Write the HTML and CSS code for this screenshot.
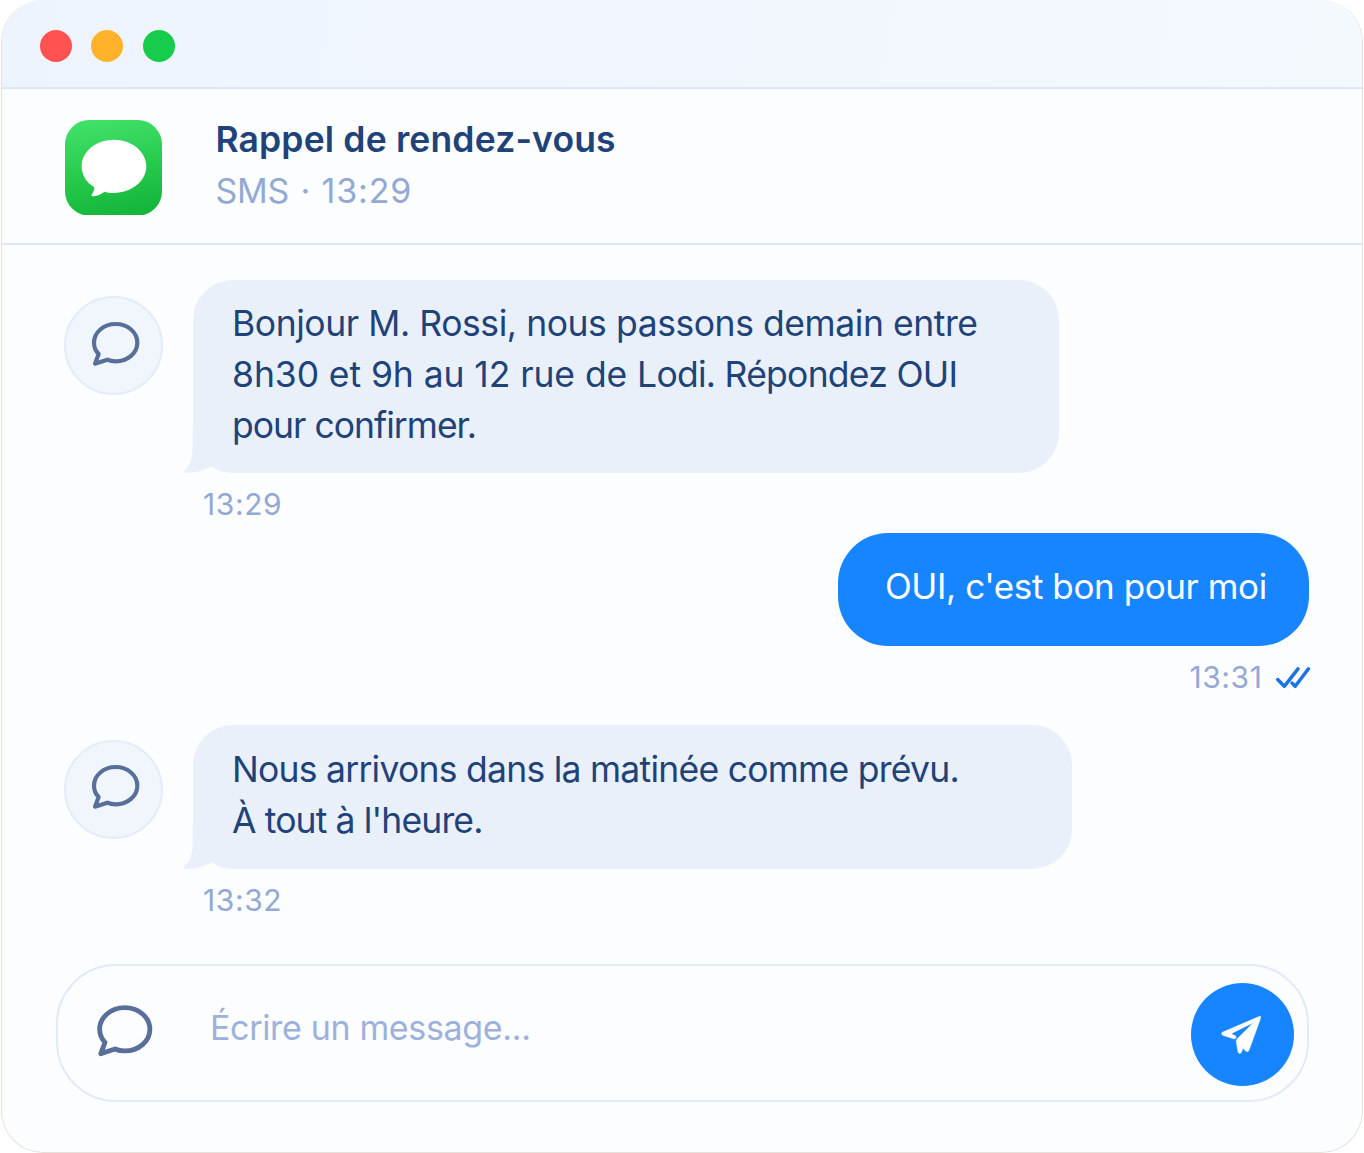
FILE: index.html
```html
<!DOCTYPE html>
<html lang="fr">
<head>
<meta charset="utf-8">
<title>Rappel de rendez-vous</title>
<link rel="stylesheet" href="styles.css">
</head>
<body>
<svg class="defs" aria-hidden="true">
  <symbol id="chat" viewBox="120 150 156 144">
    <path d="M146 252C137 243 132 231 132 218C132 187 161 162 197 162S262 187 262 218S233 274 197 274C188 274 180 273 172 269L135 281Z" fill="none" stroke="#587099" stroke-width="12.5" stroke-linejoin="round"/>
  </symbol>
  <symbol id="tail" viewBox="400 480 100 129">
    <path d="M429 480V532C429 565 420 589 403 602Q399 608 412 608.500C440 608 465 600 485 588.500L480 480Z" fill="#e9f0fa"/>
  </symbol>
</svg>
<main class="window">
  <div class="titlebar">
    <span class="dot red"></span><span class="dot amber"></span><span class="dot green"></span>
  </div>
  <header class="header">
    <svg class="app-icon" viewBox="196 358 291 287">
      <defs><linearGradient id="g" x1="0.4" y1="0" x2="0.6" y2="1"><stop offset="0" stop-color="#3fe066"/><stop offset="1" stop-color="#13b638"/></linearGradient></defs>
      <rect x="196" y="358" width="291" height="287" rx="73" fill="url(#g)"/>
      <path d="M284 560C260 546 246 523 246 497C246 453 289 417 342.500 417S440 453 440 497S396 577 342.500 577C333 577 323 576 315 573C304 581 292 586 279 587Q273 586 277 581C282 574 284 568 284 560Z" fill="#fff"/>
    </svg>
    <div class="heading">
      <h1 class="title">Rappel de rendez-vous</h1>
      <p class="subtitle">SMS · <span class="digits">13:29</span></p>
    </div>
  </header>
  <section class="thread">
    <article class="message first">
      <div class="avatar"><svg class="chat-icon"><use href="#chat"/></svg></div>
      <div class="body">
        <div class="bubble"><span class="snug">Bonjour M. Rossi, nous passons demain entre</span><br><span class="loose">8h30 et 9h au 12 rue de </span><span class="close">Lodi. Répondez OUI</span><br><span class="tighter">pour confirmer.</span><svg class="tail"><use href="#tail"/></svg></div>
        <time class="time">13:29</time>
      </div>
    </article>
    <article class="message sent">
      <div class="bubble-sent">OUI, c'est bon pour moi</div>
      <div class="status">
        <time class="time">13:31</time>
        <svg class="checks" viewBox="1275 666 36 23"><path d="M1277.700 679.500L1284.300 686.300L1298 668.800M1292 683L1295.200 686.300L1308.500 668.800" fill="none" stroke="#1f72e4" stroke-width="3.500" stroke-linecap="round" stroke-linejoin="round"/></svg>
      </div>
    </article>
    <article class="message second">
      <div class="avatar"><svg class="chat-icon"><use href="#chat"/></svg></div>
      <div class="body">
        <div class="bubble"><span class="close">Nous arrivons dans la matinée comme prévu.</span><br><span class="tight">À tout à l'heure.</span><svg class="tail"><use href="#tail"/></svg></div>
        <time class="time">13:32</time>
      </div>
    </article>
  </section>
  <footer class="composer">
    <svg class="composer-icon"><use href="#chat"/></svg>
    <span class="placeholder">Écrire un message...</span>
    <button class="send" aria-label="Envoyer">
      <svg class="plane" viewBox="180 193 128 124"><path d="M299 200L187 248Q182 252 188 257L221 267.500Q227 268 228.500 263Q228 258 223 257L216 253.500Q214 251 219 249L280 219L232 267Q228 271 229 277L234 308Q239 315 244 308L249 296L257 304Q264 309 267 302L302 205Q303 198 299 200Z" fill="#fff" stroke="#fff" stroke-width="1.500" stroke-linejoin="round"/></svg>
    </button>
  </footer>
</main>
</body>
</html>
```
FILE: styles.css
```css
* { box-sizing: border-box; margin: 0; padding: 0; }
body { background: #fff; font-family: Inter, "Liberation Sans", sans-serif; color: #1f4379; overflow: hidden; }
svg { display: block; flex: none; }
.defs { position: absolute; width: 0; height: 0; }
.window {
  display: flex; flex-direction: column;
  width: 1362px; height: 1153px; margin-left: 1px;
  border: 1px solid #e6e0d9; border-top: 0; border-radius: 42px;
  background: #fbfdff; overflow: hidden;
}
.titlebar {
  display: flex; gap: 19.700px; height: 89px; flex: none;
  padding: 30px 0 0 37.800px;
  border-bottom: 2px solid #dce7f7;
  background: linear-gradient(100deg, #eef4fd, #f4f9fe);
}
.dot { width: 32px; height: 32px; border-radius: 50%; }
.red { background: #ff5251; }
.amber { background: #ffb22a; }
.green { background: #17cc4d; }
.header {
  display: flex; gap: 53px; height: 156px; flex: none;
  padding: 30.500px 0 0 63.400px; border-bottom: 2px solid #dce7f7;
}
.app-icon { width: 97px; height: 95.700px; }
.title { font-size: 35.500px; font-weight: 600; line-height: 44px; letter-spacing: 0.150px; margin-top: -1.500px; }
.subtitle { font-size: 34px; line-height: 44px; margin-top: 7px; color: #93a9d3; word-spacing: 2px; letter-spacing: -0.200px; }
.digits { letter-spacing: 0.850px; }
.thread { display: flex; flex-direction: column; padding: 35px 53px 0 62px; }
.message { display: flex; }
.avatar {
  display: flex; flex: none; width: 99px; height: 99px; margin: 16px 30px 0 0;
  padding: 22px 0 0 23.500px; border: 2px solid #e3ecf9; border-radius: 50%; background: #f1f6fd;
}
.chat-icon { width: 52px; height: 48px; }
.bubble {
  position: relative; width: 866px; height: 193px; padding: 18px 0 0 39px;
  border-radius: 40px; background: #e9f0fa;
  font-size: 35.500px; line-height: 51px; white-space: nowrap;
}
.loose { letter-spacing: -0.080px; }
.snug { letter-spacing: -0.430px; }
.close { letter-spacing: -0.740px; }
.tight { letter-spacing: -0.860px; }
.tighter { letter-spacing: -0.980px; }
.tail { position: absolute; left: -9.700px; bottom: 0; width: 33.300px; height: 43px; }
.time { display: block; font-size: 30px; line-height: 36px; color: #93a9d3; letter-spacing: 0.600px; }
.body .time { margin: 13px 0 0 10px; }
.sent { flex-direction: column; align-items: flex-end; margin-top: 11px; }
.bubble-sent {
  width: 471px; height: 113px; padding: 28px 0 0 47px; border-radius: 50px;
  background: #1785ff; color: #fff; font-size: 35px; line-height: 51px; letter-spacing: -0.400px; white-space: nowrap;
}
.status { display: flex; gap: 12px; margin-top: 13px; }
.checks { width: 36px; height: 23px; margin: 7px -1.500px 0 0; }
.second { margin-top: 30px; }
.second .avatar { margin-top: 15px; padding-top: 21px; }
.second .bubble { width: 879px; height: 144px; padding-top: 19px; }
.composer {
  display: flex; flex: none; height: 138px; margin: 46px 53px 0 54px;
  padding: 17px 13.500px 0 37px; border: 2.500px solid #e0eaf9; border-radius: 60px;
}
.composer-icon { width: 60.300px; height: 55.700px; margin: 19.500px 0 0 0.400px; }
.placeholder { margin: 19px 0 0 54.300px; font-size: 34px; line-height: 51px; letter-spacing: -0.340px; color: #9db1dc; }
.send {
  display: flex; align-items: center; justify-content: center;
  width: 103px; height: 103px; margin-left: auto; border: 0; border-radius: 50%; background: #1785ff;
}
.plane { width: 42.700px; height: 41.300px; margin: 0 2px 0 0; }
```
